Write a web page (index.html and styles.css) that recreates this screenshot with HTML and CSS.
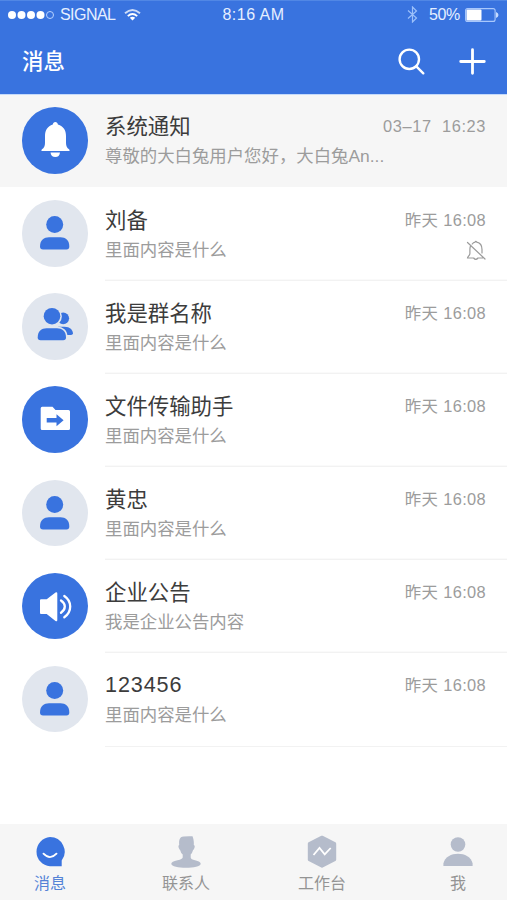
FILE: index.html
```html
<!DOCTYPE html>
<html lang="zh-CN">
<head>
<meta charset="utf-8">
<title>消息</title>
<link rel="stylesheet" href="styles.css">
</head>
<body>
<svg class="defs" aria-hidden="true">
  <symbol id="person" viewBox="0 0 66 66"><circle cx="32.7" cy="24.4" r="8.5"/><path d="M18 46.5C18 40 22 37.3 27 37.3H38.5C43.500 37.300 47.300 40 47.300 46.500Q47.300 49.500 44.500 49.500H21Q18 49.500 18 46.500Z"/></symbol>
</svg>
<div class="app">
  <header class="header">
    <div class="status">
      <div class="carrier">
        <svg class="dots" width="46" height="10" viewBox="0 0 46 10"><g fill="#fff"><circle cx="4" cy="5" r="4"/><circle cx="13.500" cy="5" r="4"/><circle cx="23" cy="5" r="4"/><circle cx="32.500" cy="5" r="4"/></g><circle cx="42" cy="5" r="3.500" fill="none" stroke="#b8d2ff"/></svg>
        <span class="signal">SIGNAL</span>
        <svg class="wifi" width="17" height="12" viewBox="0 0 17 12" fill="none" stroke="#fff" stroke-width="1.900"><path d="M1 4.300Q8.500-2.300 16 4.300" opacity=".75"/><path d="M3.800 7.100Q8.500 3 13.200 7.100"/><path d="M8.500 11.500L5.800 8.800Q8.500 6.900 11.200 8.800Z" fill="#fff" stroke="none"/></svg>
      </div>
      <span class="clock">8:16 AM</span>
      <div class="power">
        <svg class="bluetooth" width="11" height="17" viewBox="0 0 11 17" fill="none" stroke="#9cc0fa" stroke-width="1.200"><path d="M1 4.500L9.500 12L5.500 16V1L9.500 5L1 12.500"/></svg>
        <span class="percent">50%</span>
        <svg class="battery" width="34" height="14" viewBox="0 0 34 14"><rect x=".6" y=".6" width="29.500" height="12.800" rx="2" fill="none" stroke="#a9c8fc" stroke-width="1.100"/><rect x="1.500" y="1.500" width="15" height="11" rx="1" fill="#fff"/><path d="M31 4Q33.500 5 33.500 7T31 10Z" fill="#c6dbff"/></svg>
      </div>
    </div>
    <div class="titlebar">
      <h1>消息</h1>
      <div class="actions">
        <svg width="27" height="27" viewBox="0 0 27 27" fill="none" stroke="#fff" stroke-width="2.400" stroke-linecap="round"><circle cx="11.300" cy="11.300" r="9.700"/><path d="M18.300 18.300L25.300 25.300"/></svg>
        <svg width="27" height="27" viewBox="0 0 27 27" fill="none" stroke="#fff" stroke-width="2.800" stroke-linecap="round"><path d="M13.500 1.700V25.300M1.700 13.500H25.300"/></svg>
      </div>
    </div>
  </header>

  <main class="list">
    <article class="row pinned">
      <div class="avatar solid"><svg viewBox="0 0 66 66" fill="#fff"><path d="M33.300 15C34.700 15 35.700 16 35.900 17.600C41.500 19.300 44 23.500 44 29V36C44 39 45 41 47 42.200Q48.500 44 46.500 44H20.500Q18.500 44 20 42.200C22 41 23 39 23 36V29C23 23.500 25.500 19.300 30.800 17.600C31 16 31.900 15 33.300 15Z"/><path d="M28.500 45.500H38Q37.500 50 33.300 50T28.500 45.500Z"/></svg></div>
      <div class="body">
        <div class="line"><h2>系统通知</h2><time>03–17&nbsp; 16:23</time></div>
        <div class="line"><p>尊敬的大白兔用户您好，大白兔An...</p></div>
      </div>
    </article>
    <article class="row">
      <div class="avatar"><svg><use href="#person"/></svg></div>
      <div class="body">
        <div class="line"><h2>刘备</h2><time>昨天 16:08</time></div>
        <div class="line"><p>里面内容是什么</p><svg class="mute" width="20" height="21" viewBox="0 0 20 21" fill="none" stroke="#9b9b9b" stroke-width="1.200" stroke-linecap="round"><path d="M6.200 4C7 3 8 2.400 9 2.200Q9.800.5 10.800 2.200C14.500 3 16 6 16 9.500V13M4.300 6.500Q3.900 8 3.900 10V13.500C3.900 15.500 1.500 16.500 1.500 18H7.600Q9.800 20.700 12 18H16.500M1.500 2.500L19 19"/></svg></div>
      </div>
    </article>
    <article class="row">
      <div class="avatar"><svg viewBox="0 0 66 66"><circle cx="41.200" cy="25.300" r="5.900"/><path d="M36 33.700H42.500C48 33.700 50.800 37 50.900 40.200Q50.900 42 49 42H41Z"/><g stroke="#e1e6ee" stroke-width="3.200" paint-order="stroke"><circle cx="30" cy="23.200" r="8.300"/><path d="M15.700 44.500C15.700 38 19.500 35.200 24.500 35.200H35C40 35.200 44 38 44 44.500Q44 47.300 41.200 47.300H18.500Q15.700 47.300 15.700 44.500Z"/></g></svg></div>
      <div class="body">
        <div class="line"><h2>我是群名称</h2><time>昨天 16:08</time></div>
        <div class="line"><p>里面内容是什么</p></div>
      </div>
    </article>
    <article class="row">
      <div class="avatar solid"><svg viewBox="0 0 66 66"><path fill="#fff" d="M20.200 20.700H30.500L33.500 23.900H46.500Q48 23.900 48 25.400V42.500Q48 44 46.500 44H20.200Q18.700 44 18.700 42.500V22.200Q18.700 20.700 20.200 20.700Z"/><path d="M24.700 31.900H34.500V28.200L41.600 34.200L34.500 40.200V36.500H24.700Z"/></svg></div>
      <div class="body">
        <div class="line"><h2>文件传输助手</h2><time>昨天 16:08</time></div>
        <div class="line"><p>里面内容是什么</p></div>
      </div>
    </article>
    <article class="row">
      <div class="avatar"><svg><use href="#person"/></svg></div>
      <div class="body">
        <div class="line"><h2>黄忠</h2><time>昨天 16:08</time></div>
        <div class="line"><p>里面内容是什么</p></div>
      </div>
    </article>
    <article class="row">
      <div class="avatar solid"><svg viewBox="0 0 66 66"><path fill="#fff" d="M19 26.300H24.700L33.500 19.500Q35.300 18.500 35.300 20.500V47Q35.300 49 33.500 48L24.700 41H19Q18 41 18 40V27.300Q18 26.300 19 26.300Z"/><path d="M39 27.500Q42.800 30 42.800 33.600T39 39.800M42.300 23Q48.200 27 48.200 33.600T42.300 44.300" fill="none" stroke="#fff" stroke-width="2.300" stroke-linecap="round"/></svg></div>
      <div class="body">
        <div class="line"><h2>企业公告</h2><time>昨天 16:08</time></div>
        <div class="line"><p>我是企业公告内容</p></div>
      </div>
    </article>
    <article class="row">
      <div class="avatar"><svg><use href="#person"/></svg></div>
      <div class="body">
        <div class="line"><h2 class="numeric">123456</h2><time>昨天 16:08</time></div>
        <div class="line"><p>里面内容是什么</p></div>
      </div>
    </article>
  </main>

  <nav class="tabs">
    <a class="tab active"><svg viewBox="0 0 32 34"><path fill="#3973df" d="M16 2A14.700 14.700 0 0 1 27.700 25.500V31.300H16A14.700 14.700 0 0 1 16 2Z"/><path d="M9.500 18.700Q16 25.500 22.500 18.700" fill="none" stroke="#fff" stroke-width="1.900" stroke-linecap="round"/></svg><span>消息</span></a>
    <a class="tab"><svg viewBox="0 0 32 34"><path d="M11 2.200Q13 .9 22.500 1.200C23.700 4 24 7 23.800 10Q25.200 10.500 24.500 12.800Q24 14.800 23 15.200Q22.300 18 20.700 19.500V22.500Q21 24.500 25 25.200Q30.700 26.300 30.700 28.700C30.700 34.200 1.300 34.200 1.300 28.700Q1.300 26.300 7.500 25.200Q12.500 24.300 12.700 22.500V19.500Q10.800 18 10.200 15.200Q9.300 14.800 8.700 12.800Q8 10.500 9.200 10C8.800 6.500 9.300 3.500 11 2.200Z"/></svg><span>联系人</span></a>
    <a class="tab"><svg viewBox="0 0 32 34"><path stroke="#b5bccb" stroke-width="3" stroke-linejoin="round" d="M16 2.200L28.700 8.700V24.700L16 31.200L3.300 24.700V8.700Z"/><path d="M7.500 20L13.500 13L18.700 19.300L24.700 13" fill="none" stroke="#fff" stroke-width="1.800"/></svg><span>工作台</span></a>
    <a class="tab"><svg viewBox="0 0 32 34"><circle cx="16" cy="9.500" r="7.300"/><path d="M1.400 31V28.500C4 15.500 28 15.500 30.600 28.500V31Z"/></svg><span>我</span></a>
  </nav>
</div>
</body>
</html>
```
FILE: styles.css
```css
* { box-sizing: border-box; margin: 0; padding: 0; }

body {
  background: #fff;
  color: #3c3c3c;
  font-family: "Liberation Sans", "Noto Sans CJK SC", sans-serif;
}

svg { display: block; flex: none; }
.defs { display: none; }

.app {
  display: flex;
  flex-direction: column;
  width: 507px;
  height: 900px;
  overflow: hidden;
}

.header {
  height: 95px;
  background: #3973df;
  border-top: 1px solid #5187e5;
  border-bottom: 1px solid #c5dafa;
  color: #fff;
}

.status {
  display: grid;
  grid-template-columns: 1fr auto 1fr;
  align-items: center;
  height: 27px;
  padding: 0 8px 0 8px;
  font-size: 16px;
  line-height: 26px;
  color: #e5efff;
}
.carrier, .power { display: flex; align-items: center; }
.signal { margin-left: 6px; letter-spacing: -0.55px; width: 55px; white-space: nowrap; }
.wifi { margin-left: 9px; }
.clock { letter-spacing: 0.5px; }
.power { justify-content: flex-end; }
.percent { margin: 0 5px 0 11px; letter-spacing: -0.3px; }

.titlebar {
  display: flex;
  align-items: center;
  justify-content: space-between;
  height: 66px;
  padding: 0 21px 0 22px;
}
.titlebar h1 { margin-top: 2px; font-size: 21.4px; font-weight: 500; line-height: 30px; }
.actions { display: flex; gap: 34px; }

.list { flex: 1; }

.row {
  display: flex;
  height: 93.1px;
  padding-left: 22px;
}
.row.pinned { height: 92px; background: #f6f6f6; }

.avatar {
  flex: none;
  width: 66.4px;
  height: 66.4px;
  margin-top: 13.3px;
  border-radius: 50%;
  background: #e1e6ee;
  fill: #3973df;
}
.pinned .avatar { margin-top: 12.3px; }
.avatar.solid { background: #3973df; }
.avatar svg { width: 66px; height: 66px; }

.body {
  flex: 1;
  margin-left: 16.6px;
  padding: 18px 21px 0 0;
  box-shadow: 0 1px 0 #f2f2f2, 0 -1px 0 #fafafa;
}
.pinned .body { padding-top: 16px; box-shadow: none; }
.row:nth-child(2) .body { box-shadow: 0 1px 0 #f2f2f2; }

.line {
  display: flex;
  align-items: center;
  justify-content: space-between;
  height: 30px;
  white-space: nowrap;
}
h2 { padding-top: 2px; font-size: 21.4px; font-weight: 400; line-height: 30px; }
h2.numeric { padding-top: 0; font-size: 21.6px; letter-spacing: 0.9px; }
p { font-size: 17.4px; line-height: 28px; color: #9c9c9c; }
time { font-size: 16.4px; line-height: 28px; color: #9c9c9c; letter-spacing: 0.35px; }
.pinned time { letter-spacing: 0.6px; }

.tabs {
  display: flex;
  justify-content: space-between;
  height: 76px;
  padding: 11px 24px 0 25px;
  background: #f6f6f6;
}
.tab {
  display: flex;
  flex-direction: column;
  align-items: center;
  width: 50px;
  color: #949494;
  fill: #b5bccb;
  font-size: 16px;
  line-height: 24px;
}
.tab svg { width: 32px; height: 34px; }
.tab span { margin-top: 3px; white-space: nowrap; }
.tab.active { color: #5583d6; }
```
